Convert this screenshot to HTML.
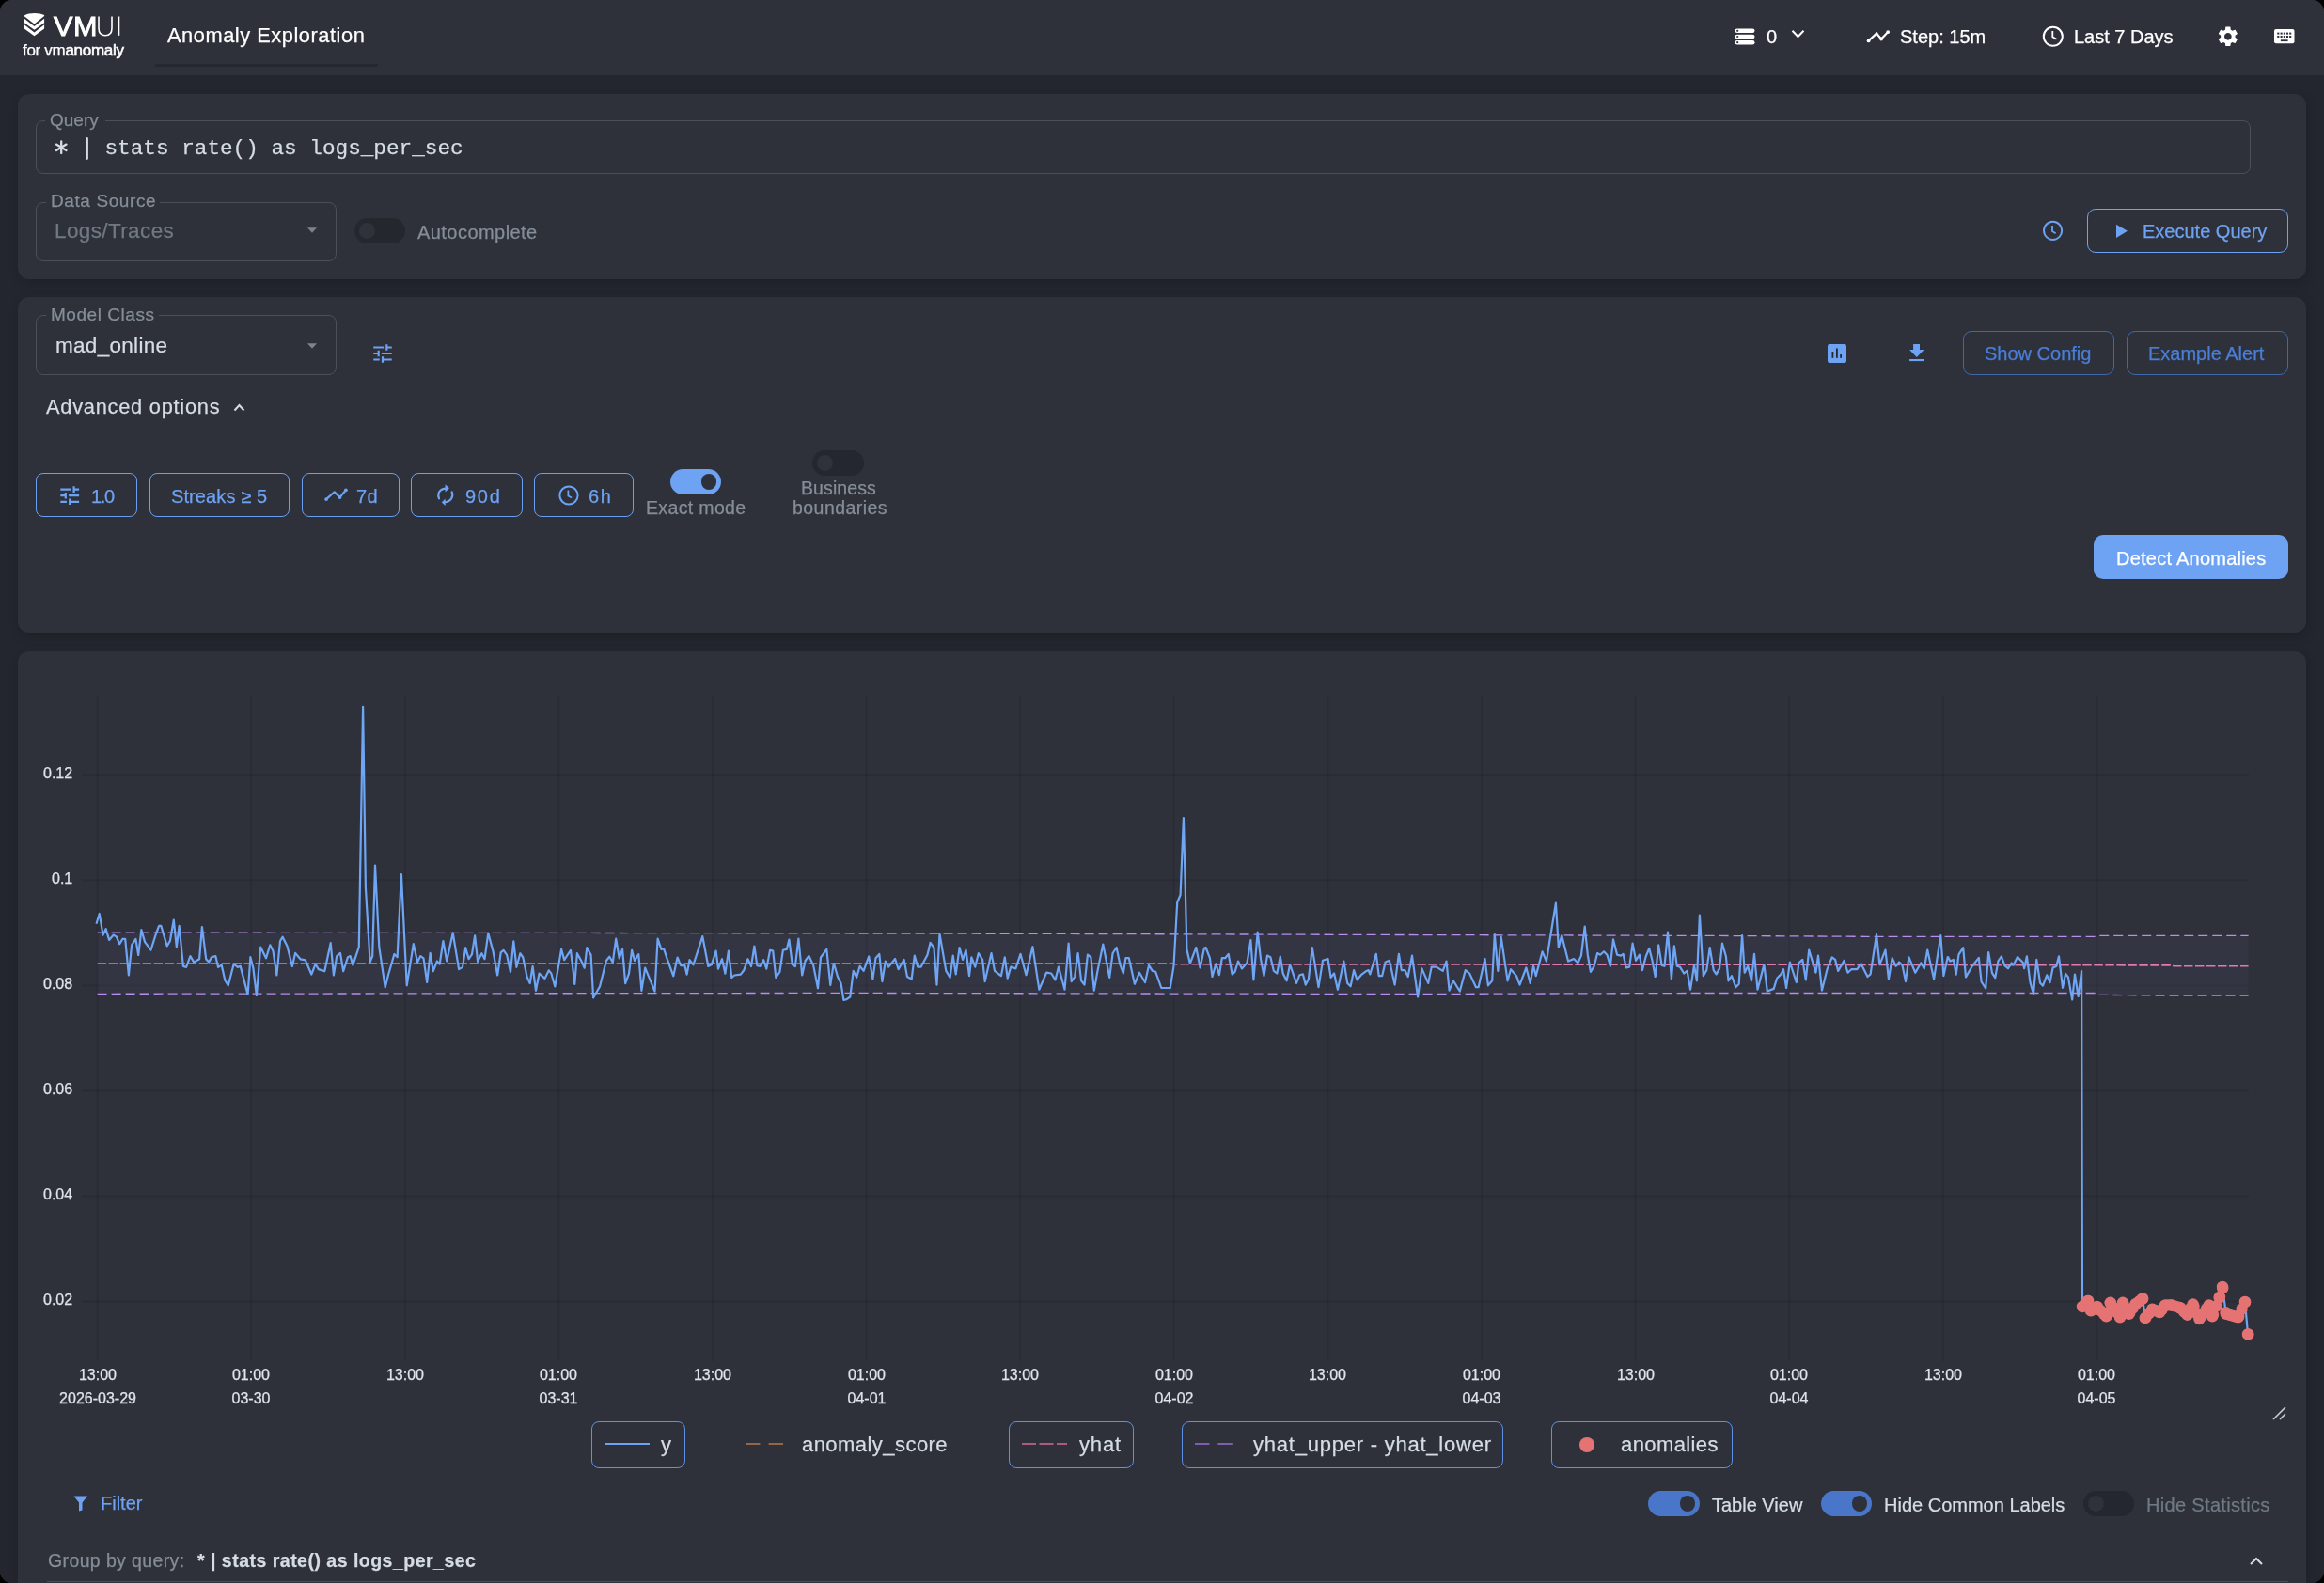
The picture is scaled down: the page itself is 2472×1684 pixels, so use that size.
<!DOCTYPE html><html><head><meta charset="utf-8"><style>
html,body{margin:0;padding:0;}
body{width:2472px;height:1684px;overflow:hidden;position:relative;background:#23262e;font-family:'Liberation Sans',sans-serif;}
.a{position:absolute;box-sizing:border-box;}
.t{position:absolute;white-space:nowrap;will-change:transform;-webkit-text-stroke:0.25px currentColor;}
</style></head><body>
<div class="a" style="left:0px;top:0px;width:2472px;height:80px;background:#2e313a;"></div>
<svg class="a" style="left:22px;top:10px;" width="30" height="32" viewBox="0 0 30 32"><path d="M3.8 6.4 C9 3.2 20 3.2 25.1 6.1 L25.1 7.1 L14.5 15.4 L3.8 7.3 Z" fill="#fff"/>
<path d="M3.8 9.8 L14.5 17.9 L25.1 9.8 L25.1 14.2 L14.5 21.8 L3.8 14.2 Z" fill="#fff"/>
<path d="M3.8 16.3 L14.5 24.5 L25.1 16.3 L25.1 20.6 L14.5 28.3 L3.8 20.6 Z" fill="#fff"/></svg>
<div class="t" style="left:56.50px;top:13.69px;font-size:28.6px;line-height:28.6px;color:#fff;font-weight:normal;font-family:'Liberation Sans', sans-serif;letter-spacing:0.6px;transform:scaleX(1.07);transform-origin:0 0;-webkit-text-stroke:0.9px #fff;">VM</div>
<svg class="a" style="left:103px;top:17px;" width="30" height="22" viewBox="0 0 30 22"><path d="M2 0.5 V13 C2 18.5 5.2 20.8 9 20.8 C12.8 20.8 16 18.5 16 13 V0.5" fill="none" stroke="#fff" stroke-width="1.6"/><path d="M23.5 0.5 V20.8" stroke="#fff" stroke-width="1.6"/></svg>
<div class="t" style="left:23.50px;top:45.15px;font-size:17px;line-height:17px;color:#fff;font-weight:normal;font-family:'Liberation Sans', sans-serif;letter-spacing:-0.3px;">for vm<span style="-webkit-text-stroke:0.55px #fff">anomaly</span></div>
<div class="t" style="left:177.50px;top:26.67px;font-size:21.8px;line-height:21.8px;color:#fff;font-weight:normal;font-family:'Liberation Sans', sans-serif;letter-spacing:0.55px;">Anomaly Exploration</div>
<div class="a" style="left:165px;top:68px;width:237px;height:3px;background:#25282f;"></div>
<svg class="a" style="left:1845px;top:30px;" width="22" height="18" viewBox="0 0 22 18"><rect x="0.5" y="0.5" width="21" height="4.6" rx="2.3" fill="#fff"/><rect x="0.5" y="6.7" width="21" height="4.6" rx="2.3" fill="#fff"/><rect x="0.5" y="12.9" width="21" height="4.6" rx="2.3" fill="#fff"/>
<circle cx="3.2" cy="2.8" r="1.1" fill="#2e313a"/><circle cx="3.2" cy="9" r="1.1" fill="#2e313a"/><circle cx="3.2" cy="15.2" r="1.1" fill="#2e313a"/></svg>
<div class="t" style="left:1879.00px;top:29.20px;font-size:20px;line-height:20px;color:#fff;font-weight:normal;font-family:'Liberation Sans', sans-serif;letter-spacing:0px;">0</div>
<svg class="a" style="left:1905px;top:31px;" width="16" height="10" viewBox="0 0 16 10"><path d="M1.5 1.8 L7.5 8 L13.5 1.8" fill="none" stroke="#fff" stroke-width="2"/></svg>
<svg class="a" style="left:1980px;top:25px;" width="34" height="26" viewBox="0 0 34 26"><path d="M7.6 18.4 L16.1 10.6 L21.1 16.5 L28.2 9.1" fill="none" stroke="#fff" stroke-width="2.2" stroke-linejoin="round"/><circle cx="7.6" cy="18.4" r="1.9" fill="#fff"/><circle cx="21.1" cy="16.5" r="1.9" fill="#fff"/><circle cx="28.2" cy="9.1" r="1.9" fill="#fff"/><circle cx="16.1" cy="10.6" r="1.3" fill="#fff"/></svg>
<div class="t" style="left:2021.00px;top:29.20px;font-size:20px;line-height:20px;color:#fff;font-weight:normal;font-family:'Liberation Sans', sans-serif;letter-spacing:0px;">Step: 15m</div>
<svg class="a" style="left:2172px;top:27px;" width="24" height="24" viewBox="0 0 24 24"><circle cx="11.8" cy="11.8" r="10" fill="none" stroke="#fff" stroke-width="2"/><path d="M11.3 6 V12.3 L15.5 14.8" fill="none" stroke="#fff" stroke-width="1.8"/></svg>
<div class="t" style="left:2206.00px;top:29.20px;font-size:20px;line-height:20px;color:#fff;font-weight:normal;font-family:'Liberation Sans', sans-serif;letter-spacing:0px;">Last 7 Days</div>
<svg class="a" style="left:2357px;top:25.8px" width="25.7" height="25.7" viewBox="0 0 24 24"><path fill="#fff" d="M19.14 12.94c.04-.3.06-.61.06-.94 0-.32-.02-.64-.07-.94l2.03-1.58c.18-.14.23-.41.12-.61l-1.92-3.32c-.12-.22-.37-.29-.59-.22l-2.39.96c-.5-.38-1.03-.7-1.62-.94l-.36-2.54c-.04-.24-.24-.41-.48-.41h-3.84c-.24 0-.43.17-.47.41l-.36 2.54c-.59.24-1.13.57-1.62.94l-2.39-.96c-.22-.08-.47 0-.59.22L2.74 8.87c-.12.21-.08.47.12.61l2.03 1.58c-.05.3-.09.63-.09.94s.02.64.07.94l-2.03 1.58c-.18.14-.23.41-.12.61l1.92 3.32c.12.22.37.29.59.22l2.39-.96c.5.38 1.03.7 1.62.94l.36 2.54c.05.24.24.41.48.41h3.84c.24 0 .44-.17.47-.41l.36-2.54c.59-.24 1.13-.56 1.62-.94l2.39.96c.22.08.47 0 .59-.22l1.92-3.32c.12-.22.07-.47-.12-.61l-2.01-1.58zM12 15.6c-1.98 0-3.6-1.62-3.6-3.6s1.62-3.6 3.6-3.6 3.6 1.62 3.6 3.6-1.62 3.6-3.6 3.6z"/></svg>
<svg class="a" style="left:2419px;top:30.9px;" width="22" height="16" viewBox="0 0 22 16"><rect x="0" y="0" width="21.5" height="15.3" rx="2" fill="#fff"/><rect x="3.25" y="3.6" width="2.1" height="2" fill="#2e313a"/><rect x="6.55" y="3.6" width="2.1" height="2" fill="#2e313a"/><rect x="9.85" y="3.6" width="2.1" height="2" fill="#2e313a"/><rect x="12.95" y="3.6" width="2.1" height="2" fill="#2e313a"/><rect x="16.15" y="3.6" width="2.1" height="2" fill="#2e313a"/><rect x="3.25" y="7.0" width="2.1" height="2" fill="#2e313a"/><rect x="6.55" y="7.0" width="2.1" height="2" fill="#2e313a"/><rect x="9.85" y="7.0" width="2.1" height="2" fill="#2e313a"/><rect x="12.95" y="7.0" width="2.1" height="2" fill="#2e313a"/><rect x="16.15" y="7.0" width="2.1" height="2" fill="#2e313a"/><rect x="6.9" y="11.3" width="7.7" height="1.8" fill="#2e313a"/></svg>
<div class="a" style="left:19px;top:100px;width:2434px;height:197px;background:#2e313a;border-radius:12px;box-shadow: rgba(0,0,0,0.16) 2px 4px 12px;"></div>
<div class="a" style="left:19px;top:316px;width:2434px;height:357px;background:#2e313a;border-radius:12px;box-shadow: rgba(0,0,0,0.16) 2px 4px 12px;"></div>
<div class="a" style="left:19px;top:693px;width:2434px;height:1067px;background:#2e313a;border-radius:12px;box-shadow: rgba(0,0,0,0.16) 2px 4px 12px;"></div>
<div class="a" style="left:38px;top:128px;width:2356px;height:57px;border:1px solid #4a4f58;border-radius:8px;"></div>
<div class="a" style="left:48px;top:126px;width:64px;height:5px;background:#2e313a;"></div>
<div class="t" style="left:53.00px;top:117.85px;font-size:19px;line-height:19px;color:#858d98;font-weight:normal;font-family:'Liberation Sans', sans-serif;letter-spacing:0px;">Query</div>
<div class="t" style="left:57.00px;top:146.55px;font-size:22.7px;line-height:22.7px;color:#d5dce4;font-weight:normal;font-family:'Liberation Mono', monospace;letter-spacing:0px;">&nbsp;&nbsp;&nbsp;&nbsp;stats rate() as logs_per_sec</div>
<svg class="a" style="left:55px;top:144px;" width="45" height="30" viewBox="0 0 45 30"><g stroke="#d5dce4" stroke-width="2.3" stroke-linecap="round"><path d="M10.2 6.5 V19.1"/><path d="M4.9 9.6 L15.5 16"/><path d="M4.9 16 L15.5 9.6"/><path d="M37.6 3.4 V24.6" stroke-width="2.6"/></g></svg>
<div class="a" style="left:38px;top:215px;width:320px;height:63px;border:1px solid #4a4f58;border-radius:8px;"></div>
<div class="a" style="left:49px;top:213px;width:121px;height:5px;background:#2e313a;"></div>
<div class="t" style="left:54.00px;top:203.85px;font-size:19px;line-height:19px;color:#858d98;font-weight:normal;font-family:'Liberation Sans', sans-serif;letter-spacing:0.6px;">Data Source</div>
<div class="t" style="left:58.00px;top:234.88px;font-size:22.5px;line-height:22.5px;color:#6f7883;font-weight:normal;font-family:'Liberation Sans', sans-serif;letter-spacing:0.38px;">Logs/Traces</div>
<svg class="a" style="left:326px;top:241px;" width="12" height="8" viewBox="0 0 12 8"><path d="M1 1.2 L11 1.2 L6 6.8 Z" fill="#7c848e"/></svg>
<div class="a" style="left:377px;top:232px;width:54px;height:27px;background:#24272d;border-radius:13.5px;"></div>
<div class="a" style="left:382.3px;top:236.9px;width:17.2px;height:17.2px;border-radius:50%;background:#2f3239;"></div>
<div class="t" style="left:443.50px;top:236.50px;font-size:20px;line-height:20px;color:#858d98;font-weight:normal;font-family:'Liberation Sans', sans-serif;letter-spacing:0.45px;">Autocomplete</div>
<svg class="a" style="left:2172px;top:234px;" width="24" height="24" viewBox="0 0 24 24"><circle cx="11.6" cy="11.3" r="9.6" fill="none" stroke="#6ea2f3" stroke-width="2"/><path d="M11 6 V12 L14.6 14.2" fill="none" stroke="#6ea2f3" stroke-width="1.8"/></svg>
<div class="a" style="left:2220px;top:222px;width:214px;height:47px;border:1px solid #6ea2f3;border-radius:9px;"></div>
<svg class="a" style="left:2250px;top:238px;" width="14" height="16" viewBox="0 0 14 16"><path d="M1 0.7 L13 7.8 L1 15 Z" fill="#6ea2f3"/></svg>
<div class="t" style="left:2279.00px;top:236.00px;font-size:20px;line-height:20px;color:#6ea2f3;font-weight:normal;font-family:'Liberation Sans', sans-serif;letter-spacing:0px;">Execute Query</div>
<div class="a" style="left:38px;top:335px;width:320px;height:64px;border:1px solid #4a4f58;border-radius:8px;"></div>
<div class="a" style="left:49px;top:333px;width:120px;height:5px;background:#2e313a;"></div>
<div class="t" style="left:54.00px;top:324.85px;font-size:19px;line-height:19px;color:#858d98;font-weight:normal;font-family:'Liberation Sans', sans-serif;letter-spacing:0.54px;">Model Class</div>
<div class="t" style="left:58.50px;top:357.07px;font-size:22.5px;line-height:22.5px;color:#d5dce4;font-weight:normal;font-family:'Liberation Sans', sans-serif;letter-spacing:0.3px;">mad_online</div>
<svg class="a" style="left:326px;top:364px;" width="12" height="8" viewBox="0 0 12 8"><path d="M1 1.2 L11 1.2 L6 6.8 Z" fill="#7c848e"/></svg>
<svg class="a" style="left:393.85px;top:362.8px" width="26.0" height="26.0" viewBox="0 0 24 24"><path fill="#6ea2f3" d="M3 17v2h6v-2H3zM3 5v2h10V5H3zm10 16v-2h8v-2h-8v-2h-2v6h2zM7 9v2H3v2h4v2h2V9H7zm14 4v-2H11v2h10zm-6-4h2V7h4V5h-4V3h-2v6z"/></svg>
<div class="t" style="left:48.50px;top:421.97px;font-size:21.8px;line-height:21.8px;color:#d5dce4;font-weight:normal;font-family:'Liberation Sans', sans-serif;letter-spacing:0.75px;">Advanced options</div>
<svg class="a" style="left:247px;top:427px;" width="15" height="12" viewBox="0 0 15 12"><path d="M2.5 9.5 L7.5 4 L12.5 9.5" fill="none" stroke="#d5dce4" stroke-width="2"/></svg>
<div class="a" style="left:38px;top:503px;width:108px;height:47px;border:1px solid #6a9ef2;border-radius:8px;"></div>
<div class="a" style="left:159px;top:503px;width:149px;height:47px;border:1px solid #6a9ef2;border-radius:8px;"></div>
<div class="a" style="left:321px;top:503px;width:104px;height:47px;border:1px solid #6a9ef2;border-radius:8px;"></div>
<div class="a" style="left:437px;top:503px;width:119px;height:47px;border:1px solid #6a9ef2;border-radius:8px;"></div>
<div class="a" style="left:568px;top:503px;width:106px;height:47px;border:1px solid #6a9ef2;border-radius:8px;"></div>
<svg class="a" style="left:61.4px;top:514.1px" width="26.4" height="26.4" viewBox="0 0 24 24"><path fill="#6ea2f3" d="M3 17v2h6v-2H3zM3 5v2h10V5H3zm10 16v-2h8v-2h-8v-2h-2v6h2zM7 9v2H3v2h4v2h2V9H7zm14 4v-2H11v2h10zm-6-4h2V7h4V5h-4V3h-2v6z"/></svg>
<div class="t" style="left:96.80px;top:517.80px;font-size:20px;line-height:20px;color:#6ea2f3;font-weight:normal;font-family:'Liberation Sans', sans-serif;letter-spacing:-1.3px;">1.0</div>
<div class="t" style="left:182.00px;top:517.80px;font-size:20px;line-height:20px;color:#6ea2f3;font-weight:normal;font-family:'Liberation Sans', sans-serif;letter-spacing:0.1px;">Streaks ≥ 5</div>
<svg class="a" style="left:340px;top:515px;" width="34" height="22" viewBox="0 0 34 22"><path d="M7.1 16.1 L15.7 8.3 L21.5 14.1 L27.9 6.3" fill="none" stroke="#6ea2f3" stroke-width="2.2" stroke-linejoin="round"/><circle cx="7.1" cy="16.1" r="1.9" fill="#6ea2f3"/><circle cx="21.5" cy="14.1" r="1.9" fill="#6ea2f3"/><circle cx="27.9" cy="6.3" r="1.9" fill="#6ea2f3"/></svg>
<div class="t" style="left:379.00px;top:517.80px;font-size:20px;line-height:20px;color:#6ea2f3;font-weight:normal;font-family:'Liberation Sans', sans-serif;letter-spacing:0.5px;">7d</div>
<svg class="a" style="left:458px;top:510px;" width="32" height="32" viewBox="0 0 32 32"><path d="M16 9.6 C12.5 9.9 9.6 11.6 8.6 14.6 C8 16.5 8.2 18.6 9 20.4" fill="none" stroke="#6ea2f3" stroke-width="2.2" stroke-linecap="round"/><path d="M19.9 9.3 L15.6 5.2 L15.5 13.5 Z" fill="#6ea2f3"/><path d="M22.7 13.3 C23.6 15.6 23.5 18.4 22 20.7 C20.4 23 17.6 24.2 14.5 24.3" fill="none" stroke="#6ea2f3" stroke-width="2.2" stroke-linecap="round"/><path d="M11.8 24.4 L15.6 20.6 L15.7 28 Z" fill="#6ea2f3"/></svg>
<div class="t" style="left:495.20px;top:517.80px;font-size:20px;line-height:20px;color:#6ea2f3;font-weight:normal;font-family:'Liberation Sans', sans-serif;letter-spacing:1.7px;">90d</div>
<svg class="a" style="left:593px;top:515px;" width="24" height="24" viewBox="0 0 24 24"><circle cx="12" cy="12" r="9.6" fill="none" stroke="#6ea2f3" stroke-width="2"/><path d="M11.4 6.5 V12.4 L15 14.6" fill="none" stroke="#6ea2f3" stroke-width="1.8"/></svg>
<div class="t" style="left:626.30px;top:517.80px;font-size:20px;line-height:20px;color:#6ea2f3;font-weight:normal;font-family:'Liberation Sans', sans-serif;letter-spacing:1.6px;">6h</div>
<div class="a" style="left:713px;top:499px;width:54px;height:27px;background:#6ea2f3;border-radius:13.5px;"></div>
<div class="a" style="left:745.6px;top:504.1px;width:16.8px;height:16.8px;border-radius:50%;background:#2e313a;"></div>
<div class="t" style="left:686.50px;top:530.62px;font-size:19.5px;line-height:19.5px;color:#858d98;font-weight:normal;font-family:'Liberation Sans', sans-serif;letter-spacing:0.35px;">Exact mode</div>
<div class="a" style="left:864px;top:479px;width:55px;height:27px;background:#24272d;border-radius:13.5px;"></div>
<div class="a" style="left:869.3px;top:483.9px;width:17.2px;height:17.2px;border-radius:50%;background:#2f3239;"></div>
<div class="t" style="left:852.00px;top:509.63px;font-size:19.5px;line-height:19.5px;color:#858d98;font-weight:normal;font-family:'Liberation Sans', sans-serif;letter-spacing:0.1px;">Business</div>
<div class="t" style="left:842.50px;top:530.62px;font-size:19.5px;line-height:19.5px;color:#858d98;font-weight:normal;font-family:'Liberation Sans', sans-serif;letter-spacing:0.45px;">boundaries</div>
<svg class="a" style="left:1944px;top:366px;" width="20" height="20" viewBox="0 0 20 20"><rect x="0" y="0" width="20" height="20" rx="2.2" fill="#6ea2f3"/><rect x="4.5" y="8" width="1.8" height="6.8" fill="#25282e"/><rect x="9" y="4.5" width="1.8" height="10.3" fill="#25282e"/><rect x="13.2" y="11" width="1.8" height="3.8" fill="#25282e"/></svg>
<svg class="a" style="left:2030px;top:365px;" width="18" height="21" viewBox="0 0 18 21"><path d="M5.1 0.9 H12 V7.1 H16.6 L8.8 14.9 L1.1 7.1 H5.1 Z" fill="#6ea2f3"/><rect x="1.1" y="17" width="14.9" height="2.1" fill="#6ea2f3"/></svg>
<div class="a" style="left:2088px;top:352px;width:161px;height:47px;border:1px solid #3f68a8;border-radius:9px;"></div>
<div class="t" style="left:2111.00px;top:365.90px;font-size:20px;line-height:20px;color:#4a7ed8;font-weight:normal;font-family:'Liberation Sans', sans-serif;letter-spacing:0px;">Show Config</div>
<div class="a" style="left:2262px;top:352px;width:172px;height:47px;border:1px solid #3f68a8;border-radius:9px;"></div>
<div class="t" style="left:2285.00px;top:365.90px;font-size:20px;line-height:20px;color:#4a7ed8;font-weight:normal;font-family:'Liberation Sans', sans-serif;letter-spacing:0px;">Example Alert</div>
<div class="a" style="left:2227px;top:569px;width:207px;height:47px;background:#6ea2f3;border-radius:10px;"></div>
<div class="t" style="left:2250.50px;top:583.50px;font-size:20px;line-height:20px;color:#fff;font-weight:normal;font-family:'Liberation Sans', sans-serif;letter-spacing:0.24px;">Detect Anomalies</div>
<svg class="a" style="left:0;top:0" width="2472" height="1684">
<line x1="87" y1="824.2" x2="2392" y2="824.2" stroke="rgba(0,0,0,0.1)" stroke-width="2"/>
<line x1="87" y1="936.3" x2="2392" y2="936.3" stroke="rgba(0,0,0,0.1)" stroke-width="2"/>
<line x1="87" y1="1048.4" x2="2392" y2="1048.4" stroke="rgba(0,0,0,0.1)" stroke-width="2"/>
<line x1="87" y1="1160.4" x2="2392" y2="1160.4" stroke="rgba(0,0,0,0.1)" stroke-width="2"/>
<line x1="87" y1="1272.5" x2="2392" y2="1272.5" stroke="rgba(0,0,0,0.1)" stroke-width="2"/>
<line x1="87" y1="1384.5" x2="2392" y2="1384.5" stroke="rgba(0,0,0,0.1)" stroke-width="2"/>
<line x1="103.6" y1="740" x2="103.6" y2="1448" stroke="rgba(0,0,0,0.1)" stroke-width="2"/>
<line x1="267.2" y1="740" x2="267.2" y2="1448" stroke="rgba(0,0,0,0.1)" stroke-width="2"/>
<line x1="430.8" y1="740" x2="430.8" y2="1448" stroke="rgba(0,0,0,0.1)" stroke-width="2"/>
<line x1="594.4" y1="740" x2="594.4" y2="1448" stroke="rgba(0,0,0,0.1)" stroke-width="2"/>
<line x1="758.0" y1="740" x2="758.0" y2="1448" stroke="rgba(0,0,0,0.1)" stroke-width="2"/>
<line x1="921.6" y1="740" x2="921.6" y2="1448" stroke="rgba(0,0,0,0.1)" stroke-width="2"/>
<line x1="1085.2" y1="740" x2="1085.2" y2="1448" stroke="rgba(0,0,0,0.1)" stroke-width="2"/>
<line x1="1248.8" y1="740" x2="1248.8" y2="1448" stroke="rgba(0,0,0,0.1)" stroke-width="2"/>
<line x1="1412.4" y1="740" x2="1412.4" y2="1448" stroke="rgba(0,0,0,0.1)" stroke-width="2"/>
<line x1="1576.0" y1="740" x2="1576.0" y2="1448" stroke="rgba(0,0,0,0.1)" stroke-width="2"/>
<line x1="1739.6" y1="740" x2="1739.6" y2="1448" stroke="rgba(0,0,0,0.1)" stroke-width="2"/>
<line x1="1903.2" y1="740" x2="1903.2" y2="1448" stroke="rgba(0,0,0,0.1)" stroke-width="2"/>
<line x1="2066.8" y1="740" x2="2066.8" y2="1448" stroke="rgba(0,0,0,0.1)" stroke-width="2"/>
<line x1="2230.4" y1="740" x2="2230.4" y2="1448" stroke="rgba(0,0,0,0.1)" stroke-width="2"/>
<polygon points="103.6,992.2 592,992.4 1083,993.3 1492,994.5 1820,995.4 1985,996.3 2230,996.3 2231,995.4 2391.6,995.4 2391.6,1059.2 2311,1059.2 2231,1058.3 2230,1056.5 1800,1056.5 1492,1057.5 900,1056.4 103.6,1057.3" fill="rgba(160,130,230,0.055)"/>
<polyline points="103.6,992.2 592,992.4 1083,993.3 1492,994.5 1820,995.4 1985,996.3 2230,996.3 2231,995.4 2391.6,995.4" fill="none" stroke="#b98cf0" stroke-width="1.3" stroke-dasharray="10 5"/>
<polyline points="103.6,1057.3 900,1056.4 1492,1057.5 1800,1056.5 2230,1056.5 2231,1058.3 2311,1059.2 2391.6,1059.2" fill="none" stroke="#b98cf0" stroke-width="1.3" stroke-dasharray="10 5"/>
<polyline points="103.6,1025 1248,1025 1249,1025.8 1900,1026.3 2311,1026.9 2312,1027.8 2391.6,1027.8" fill="none" stroke="#e479b0" stroke-width="1.6" stroke-dasharray="9.5 2.5"/>
<polyline points="102.5,982.7 105.7,972.0 109.6,994.6 112.6,988.1 116.1,999.9 120.8,994.6 124.0,996.7 127.2,1004.2 130.4,998.9 133.2,998.9 136.9,1037.5 140.1,1005.3 144.4,998.9 147.2,1016.0 150.4,989.2 154.1,1002.1 160.5,1010.7 165.9,993.5 169.1,984.9 171.3,984.9 177.7,1006.4 180.9,1001.0 184.8,978.5 187.8,1007.5 190.6,984.9 194.9,1027.9 198.1,1028.9 202.4,1017.1 206.3,1023.6 212.1,1020.3 214.9,986.0 219.2,1020.3 222.2,1023.6 225.0,1018.2 229.3,1017.1 232.1,1028.9 235.7,1026.8 239.4,1042.9 242.8,1048.3 248.6,1025.7 252.9,1028.9 255.7,1027.9 263.6,1057.9 266.4,1018.2 269.4,1030.0 272.9,1059.0 277.2,1007.5 283.0,1019.3 287.3,1005.3 290.5,1011.8 294.4,1037.5 298.0,1001.0 300.6,996.7 305.5,1006.4 310.9,1027.9 314.1,1013.9 319.5,1020.3 324.9,1021.4 331.3,1036.5 335.6,1025.7 338.8,1031.1 345.3,1033.2 351.7,1003.2 354.9,1037.5 358.2,1017.1 362.0,1013.9 365.2,1033.2 370.0,1018.2 372.6,1017.1 375.3,1026.8 381.8,1007.5 386.1,751.8 388.9,944.1 393.6,1023.6 396.2,1017.1 399.0,920.5 403.3,1007.5 409.7,1050.4 412.9,1037.5 419.4,1015.0 422.6,1018.2 426.9,930.1 432.7,1048.3 439.8,1004.2 444.1,1023.6 447.3,1017.1 450.5,1019.3 454.2,1045.0 457.6,1013.9 460.8,1033.2 464.9,1022.5 467.7,1025.7 471.4,1001.0 475.2,1022.5 481.7,992.4 488.1,1031.1 492.0,1028.9 495.2,1008.2 498.6,1020.2 502.0,1015.1 505.1,995.3 508.1,1022.8 512.4,1014.2 515.5,1020.2 519.3,992.7 524.4,1011.6 529.2,1037.5 532.7,1013.4 535.6,1010.8 539.1,1015.9 543.0,1034.0 546.3,1001.3 549.4,1028.8 553.3,1014.2 556.3,1018.5 560.6,1039.2 563.7,1046.1 566.6,1028.0 570.0,1053.8 573.5,1035.7 579.5,1040.9 583.8,1032.3 586.4,1035.7 590.3,1049.5 597.1,1009.9 600.2,1021.1 607.0,1010.8 611.3,1046.9 613.9,1014.2 618.2,1022.0 621.7,1029.7 624.3,1008.2 628.6,1015.9 631.1,1061.5 638.0,1049.5 644.9,1022.0 648.3,1017.7 651.8,1023.7 655.2,998.7 658.7,1019.4 662.1,1009.9 665.2,1046.1 669.0,1035.7 672.1,1010.8 675.0,1022.0 679.3,1015.1 682.4,1053.8 686.2,1029.7 696.5,1054.7 699.6,998.7 703.4,1009.9 706.0,1009.1 710.3,1022.0 716.3,1038.3 720.6,1018.5 724.1,1027.1 728.4,1027.1 730.6,1036.6 733.5,1021.1 737.5,1026.3 747.3,996.1 753.3,1028.0 756.8,1026.3 761.6,1011.6 764.0,1030.6 768.0,1020.2 771.4,1035.7 774.9,1011.6 778.3,1040.0 781.2,1037.5 787.8,1036.6 791.2,1032.3 795.5,1020.2 799.0,1028.0 802.4,1006.5 805.3,1027.1 808.4,1028.0 812.2,1021.1 815.3,1030.6 819.1,1010.8 822.2,1011.6 825.3,1040.0 829.4,1034.0 832.9,1010.8 836.8,1009.9 839.4,999.6 842.8,1026.3 845.9,1028.0 849.4,998.7 853.2,1037.5 856.6,1022.0 860.4,1016.8 865.2,1027.1 870.0,1051.2 873.0,1018.5 879.3,1009.9 883.3,1047.8 886.7,1025.4 887.1,1025.2 891.0,1039.0 894.5,1045.9 897.4,1063.9 900.5,1063.1 904.3,1060.5 907.7,1032.9 911.2,1039.8 914.6,1027.8 918.6,1032.9 924.2,1017.5 928.4,1041.5 931.5,1019.2 935.3,1014.9 938.4,1044.1 941.8,1022.6 945.2,1028.6 952.1,1020.0 955.6,1031.2 961.6,1020.9 965.0,1039.0 969.7,1041.5 972.8,1016.6 976.2,1028.6 979.7,1028.6 986.5,1015.7 989.6,1002.8 993.4,1008.0 996.5,1047.6 999.5,993.4 1006.3,1032.9 1010.6,1039.8 1013.7,1016.6 1016.7,1036.4 1020.6,1008.0 1024.1,1020.9 1027.5,1010.6 1031.0,1038.1 1033.4,1018.3 1037.3,1028.6 1040.8,1014.0 1045.1,1020.9 1047.7,1044.1 1054.5,1014.0 1058.0,1032.9 1064.9,1038.1 1068.8,1018.3 1071.7,1040.7 1075.2,1028.6 1080.4,1030.4 1085.5,1014.9 1091.5,1037.2 1098.4,1007.1 1105.3,1052.7 1113.1,1034.7 1118.2,1035.5 1122.5,1042.4 1126.0,1028.6 1132.5,1052.7 1136.6,1003.7 1139.7,1044.1 1143.2,1039.0 1146.6,1014.0 1150.1,1043.3 1153.5,1047.6 1156.9,1015.7 1160.4,1018.3 1163.8,1053.6 1167.3,1033.8 1173.3,1004.5 1180.2,1039.8 1183.6,1014.0 1187.6,1008.0 1191.4,1026.1 1194.8,1035.5 1197.4,1019.2 1200.8,1019.2 1206.9,1046.7 1212.0,1034.7 1218.0,1045.0 1222.0,1026.9 1225.8,1032.9 1229.2,1033.8 1235.3,1051.0 1244.7,1051.0 1248.5,1027.8 1252.2,960.0 1255.6,952.0 1258.9,870.0 1262.4,1010.0 1265.8,1025.0 1272.3,1008.0 1276.6,1029.5 1280.9,1008.8 1282.6,1008.0 1286.9,1019.2 1289.5,1039.0 1293.4,1025.2 1296.9,1037.2 1299.8,1019.2 1303.2,1019.2 1306.7,1014.9 1310.6,1036.4 1313.6,1033.8 1317.0,1022.6 1321.0,1030.4 1326.5,1024.3 1330.4,1000.2 1333.4,1042.4 1337.7,991.6 1341.1,1020.9 1344.5,1038.1 1348.0,1016.6 1351.4,1018.3 1354.9,1032.9 1358.3,1035.5 1361.8,1017.5 1364.7,1035.5 1368.6,1043.3 1372.1,1026.1 1379.0,1045.9 1382.4,1037.2 1385.9,1036.4 1388.8,1047.6 1391.9,1041.5 1395.8,1008.0 1402.5,1050.2 1407.0,1021.8 1412.5,1020.0 1415.6,1039.8 1419.1,1035.5 1422.9,1052.7 1429.4,1022.6 1433.2,1045.9 1436.6,1049.3 1440.1,1032.1 1443.5,1042.4 1447.8,1037.2 1452.1,1033.8 1455.6,1032.1 1457.3,1036.4 1463.8,1014.9 1466.7,1038.1 1470.2,1038.1 1473.6,1023.5 1477.9,1021.8 1483.6,1047.6 1487.9,1014.9 1490.8,1032.1 1494.3,1032.1 1497.7,1039.0 1502.0,1016.6 1508.1,1060.5 1512.4,1030.4 1519.2,1045.9 1522.7,1028.6 1527.8,1028.6 1534.7,1032.9 1538.5,1022.6 1541.6,1053.6 1545.9,1043.3 1552.8,1054.5 1558.8,1032.1 1563.1,1035.5 1570.0,1050.2 1572.6,1050.2 1579.5,1020.0 1582.9,1048.4 1587.2,1043.3 1589.8,994.2 1593.3,1032.9 1596.7,996.8 1603.6,1043.3 1607.0,1031.2 1613.0,1038.1 1616.5,1047.6 1623.4,1029.5 1627.7,1045.9 1631.1,1027.8 1633.7,1038.1 1640.6,1012.3 1644.9,1022.6 1654.9,960.7 1657.8,1008.0 1661.2,995.1 1668.1,1022.6 1674.1,1020.0 1678.4,1024.3 1681.9,1016.6 1685.7,985.6 1688.8,1015.7 1691.9,1033.8 1695.7,1027.8 1699.1,1014.0 1702.2,1015.7 1706.0,1012.3 1709.4,1015.7 1712.9,1027.8 1716.0,999.4 1720.1,1015.7 1724.1,1016.6 1726.6,1014.9 1729.7,1029.5 1733.2,1028.6 1736.6,1003.7 1740.1,1021.8 1743.8,1015.7 1746.9,1032.1 1750.7,1017.5 1754.2,1008.8 1757.3,1020.9 1760.7,1039.0 1764.2,1005.4 1767.6,1026.9 1770.5,1027.8 1774.0,991.6 1777.9,1041.5 1780.9,1006.3 1783.8,1027.8 1786.9,1028.6 1791.2,1035.5 1794.6,1032.9 1798.1,1052.7 1802.0,1026.9 1804.9,1043.3 1807.9,973.6 1811.8,1038.1 1815.3,1032.1 1818.7,1008.0 1822.7,1032.1 1825.6,1036.4 1829.0,1030.4 1832.0,1003.7 1835.9,1017.5 1838.5,1043.3 1842.0,1038.1 1846.3,1050.2 1849.7,1046.7 1853.1,995.1 1855.7,1034.7 1859.2,1027.8 1863.0,1043.3 1866.0,1014.9 1869.5,1052.7 1876.4,1026.1 1879.8,1054.5 1886.7,1051.9 1890.1,1040.7 1894.4,1036.4 1897.0,1031.2 1900.1,1051.0 1903.9,1023.5 1910.8,1045.0 1913.4,1024.3 1917.3,1020.9 1920.8,1042.4 1924.2,1010.6 1931.5,1034.7 1934.0,1016.6 1938.0,1053.6 1943.5,1031.2 1948.7,1018.3 1952.1,1020.9 1955.2,1032.9 1961.6,1021.8 1965.5,1034.7 1969.3,1031.2 1975.3,1031.2 1979.6,1025.2 1986.5,1039.0 1989.6,1036.4 1996.0,994.2 1999.4,1026.1 2005.5,1010.6 2008.9,1041.5 2012.7,1019.2 2016.7,1027.8 2020.1,1023.5 2023.5,1026.9 2027.0,1044.1 2030.4,1018.3 2037.3,1034.7 2043.3,1024.3 2046.8,1030.4 2050.2,1010.6 2057.1,1041.5 2064.3,995.1 2067.4,1038.1 2071.7,1018.3 2072.1,1018.1 2074.3,1022.4 2077.8,1020.9 2080.7,1036.6 2083.5,1015.3 2088.2,1008.2 2091.0,1039.4 2097.7,1028.0 2104.8,1018.8 2107.6,1044.4 2112.2,1051.5 2115.2,1013.1 2119.0,1035.1 2122.3,1040.1 2125.4,1022.4 2128.9,1017.4 2132.5,1027.3 2136.0,1030.2 2139.6,1024.5 2141.7,1026.6 2146.0,1018.1 2151.7,1023.8 2153.1,1030.2 2155.9,1017.4 2159.5,1045.1 2163.0,1057.2 2166.3,1020.9 2170.1,1045.8 2173.0,1048.6 2177.2,1037.3 2180.5,1045.1 2183.6,1029.5 2187.2,1028.0 2190.0,1017.4 2194.0,1050.8 2197.1,1035.9 2199.9,1039.4 2204.2,1063.5 2207.0,1036.6 2210.6,1060.0 2214.1,1033.0 2215.0,1390.0 2217.6,1387.4 2221.0,1384.0 2221.0,1384.0 2224.0,1394.4 2224.4,1394.1 2227.8,1391.8 2230.5,1390.0 2231.2,1390.8 2234.6,1394.4 2238.0,1397.9 2240.4,1400.4 2241.5,1396.8 2244.7,1385.8 2244.9,1386.1 2248.3,1391.2 2251.7,1396.3 2255.0,1401.3 2255.1,1400.8 2258.0,1385.8 2258.5,1386.7 2261.9,1393.1 2264.5,1397.9 2265.3,1396.7 2268.7,1391.5 2271.4,1387.5 2272.1,1386.9 2275.5,1384.3 2278.9,1381.7 2279.2,1381.5 2281.8,1402.2 2282.4,1401.5 2285.8,1397.3 2289.2,1393.1 2289.5,1392.7 2292.6,1394.0 2296.0,1395.5 2297.2,1396.0 2299.4,1393.3 2302.8,1389.0 2303.3,1388.4 2306.2,1388.4 2309.3,1388.4 2309.6,1388.5 2313.0,1389.4 2316.4,1390.4 2318.8,1391.0 2319.8,1392.0 2323.3,1395.5 2326.5,1398.7 2326.7,1398.4 2330.1,1392.0 2332.5,1387.5 2333.5,1389.7 2336.9,1397.4 2339.4,1403.0 2340.3,1401.7 2343.7,1396.9 2347.1,1392.1 2349.7,1388.4 2350.5,1391.2 2353.2,1400.4 2353.9,1398.5 2357.3,1389.5 2360.7,1380.5 2361.0,1379.8 2364.0,1369.0 2364.2,1370.2 2367.6,1396.1 2367.8,1397.9 2371.0,1398.7 2374.4,1399.6 2377.8,1400.5 2380.7,1401.3 2381.2,1400.2 2384.6,1392.6 2388.0,1385.0 2388.0,1385.2 2391.0,1419.4 2391.4,1419.4" fill="none" stroke="#6ea6f5" stroke-width="2.2" stroke-linejoin="round"/>
<circle cx="2215.0" cy="1390.0" r="6.2" fill="#e57373"/>
<circle cx="2217.6" cy="1387.4" r="6.2" fill="#e57373"/>
<circle cx="2221.0" cy="1384.0" r="6.2" fill="#e57373"/>
<circle cx="2221.0" cy="1384.0" r="6.2" fill="#e57373"/>
<circle cx="2224.0" cy="1394.4" r="6.2" fill="#e57373"/>
<circle cx="2224.4" cy="1394.1" r="6.2" fill="#e57373"/>
<circle cx="2227.8" cy="1391.8" r="6.2" fill="#e57373"/>
<circle cx="2230.5" cy="1390.0" r="6.2" fill="#e57373"/>
<circle cx="2231.2" cy="1390.8" r="6.2" fill="#e57373"/>
<circle cx="2234.6" cy="1394.4" r="6.2" fill="#e57373"/>
<circle cx="2238.0" cy="1397.9" r="6.2" fill="#e57373"/>
<circle cx="2240.4" cy="1400.4" r="6.2" fill="#e57373"/>
<circle cx="2241.5" cy="1396.8" r="6.2" fill="#e57373"/>
<circle cx="2244.7" cy="1385.8" r="6.2" fill="#e57373"/>
<circle cx="2244.9" cy="1386.1" r="6.2" fill="#e57373"/>
<circle cx="2248.3" cy="1391.2" r="6.2" fill="#e57373"/>
<circle cx="2251.7" cy="1396.3" r="6.2" fill="#e57373"/>
<circle cx="2255.0" cy="1401.3" r="6.2" fill="#e57373"/>
<circle cx="2255.1" cy="1400.8" r="6.2" fill="#e57373"/>
<circle cx="2258.0" cy="1385.8" r="6.2" fill="#e57373"/>
<circle cx="2258.5" cy="1386.7" r="6.2" fill="#e57373"/>
<circle cx="2261.9" cy="1393.1" r="6.2" fill="#e57373"/>
<circle cx="2264.5" cy="1397.9" r="6.2" fill="#e57373"/>
<circle cx="2265.3" cy="1396.7" r="6.2" fill="#e57373"/>
<circle cx="2268.7" cy="1391.5" r="6.2" fill="#e57373"/>
<circle cx="2271.4" cy="1387.5" r="6.2" fill="#e57373"/>
<circle cx="2272.1" cy="1386.9" r="6.2" fill="#e57373"/>
<circle cx="2275.5" cy="1384.3" r="6.2" fill="#e57373"/>
<circle cx="2278.9" cy="1381.7" r="6.2" fill="#e57373"/>
<circle cx="2279.2" cy="1381.5" r="6.2" fill="#e57373"/>
<circle cx="2281.8" cy="1402.2" r="6.2" fill="#e57373"/>
<circle cx="2282.4" cy="1401.5" r="6.2" fill="#e57373"/>
<circle cx="2285.8" cy="1397.3" r="6.2" fill="#e57373"/>
<circle cx="2289.2" cy="1393.1" r="6.2" fill="#e57373"/>
<circle cx="2289.5" cy="1392.7" r="6.2" fill="#e57373"/>
<circle cx="2292.6" cy="1394.0" r="6.2" fill="#e57373"/>
<circle cx="2296.0" cy="1395.5" r="6.2" fill="#e57373"/>
<circle cx="2297.2" cy="1396.0" r="6.2" fill="#e57373"/>
<circle cx="2299.4" cy="1393.3" r="6.2" fill="#e57373"/>
<circle cx="2302.8" cy="1389.0" r="6.2" fill="#e57373"/>
<circle cx="2303.3" cy="1388.4" r="6.2" fill="#e57373"/>
<circle cx="2306.2" cy="1388.4" r="6.2" fill="#e57373"/>
<circle cx="2309.3" cy="1388.4" r="6.2" fill="#e57373"/>
<circle cx="2309.6" cy="1388.5" r="6.2" fill="#e57373"/>
<circle cx="2313.0" cy="1389.4" r="6.2" fill="#e57373"/>
<circle cx="2316.4" cy="1390.4" r="6.2" fill="#e57373"/>
<circle cx="2318.8" cy="1391.0" r="6.2" fill="#e57373"/>
<circle cx="2319.8" cy="1392.0" r="6.2" fill="#e57373"/>
<circle cx="2323.3" cy="1395.5" r="6.2" fill="#e57373"/>
<circle cx="2326.5" cy="1398.7" r="6.2" fill="#e57373"/>
<circle cx="2326.7" cy="1398.4" r="6.2" fill="#e57373"/>
<circle cx="2330.1" cy="1392.0" r="6.2" fill="#e57373"/>
<circle cx="2332.5" cy="1387.5" r="6.2" fill="#e57373"/>
<circle cx="2333.5" cy="1389.7" r="6.2" fill="#e57373"/>
<circle cx="2336.9" cy="1397.4" r="6.2" fill="#e57373"/>
<circle cx="2339.4" cy="1403.0" r="6.2" fill="#e57373"/>
<circle cx="2340.3" cy="1401.7" r="6.2" fill="#e57373"/>
<circle cx="2343.7" cy="1396.9" r="6.2" fill="#e57373"/>
<circle cx="2347.1" cy="1392.1" r="6.2" fill="#e57373"/>
<circle cx="2349.7" cy="1388.4" r="6.2" fill="#e57373"/>
<circle cx="2350.5" cy="1391.2" r="6.2" fill="#e57373"/>
<circle cx="2353.2" cy="1400.4" r="6.2" fill="#e57373"/>
<circle cx="2353.9" cy="1398.5" r="6.2" fill="#e57373"/>
<circle cx="2357.3" cy="1389.5" r="6.2" fill="#e57373"/>
<circle cx="2360.7" cy="1380.5" r="6.2" fill="#e57373"/>
<circle cx="2361.0" cy="1379.8" r="6.2" fill="#e57373"/>
<circle cx="2364.0" cy="1369.0" r="6.2" fill="#e57373"/>
<circle cx="2364.2" cy="1370.2" r="6.2" fill="#e57373"/>
<circle cx="2367.6" cy="1396.1" r="6.2" fill="#e57373"/>
<circle cx="2367.8" cy="1397.9" r="6.2" fill="#e57373"/>
<circle cx="2371.0" cy="1398.7" r="6.2" fill="#e57373"/>
<circle cx="2374.4" cy="1399.6" r="6.2" fill="#e57373"/>
<circle cx="2377.8" cy="1400.5" r="6.2" fill="#e57373"/>
<circle cx="2380.7" cy="1401.3" r="6.2" fill="#e57373"/>
<circle cx="2381.2" cy="1400.2" r="6.2" fill="#e57373"/>
<circle cx="2384.6" cy="1392.6" r="6.2" fill="#e57373"/>
<circle cx="2388.0" cy="1385.0" r="6.2" fill="#e57373"/>
<circle cx="2388.0" cy="1385.2" r="6.2" fill="#e57373"/>
<circle cx="2391.0" cy="1419.4" r="6.2" fill="#e57373"/>
<circle cx="2391.4" cy="1419.4" r="6.2" fill="#e57373"/>
<path d="M2418 1510 L2431 1497 M2425 1510 L2431 1504" stroke="#c8cdd3" stroke-width="1.6"/>
</svg>
<div class="t" style="right:2394.5px;top:814.9px;font-size:16px;line-height:16px;color:#dfe4ea;">0.12</div>
<div class="t" style="right:2394.5px;top:927.0px;font-size:16px;line-height:16px;color:#dfe4ea;">0.1</div>
<div class="t" style="right:2394.5px;top:1039.1px;font-size:16px;line-height:16px;color:#dfe4ea;">0.08</div>
<div class="t" style="right:2394.5px;top:1151.1px;font-size:16px;line-height:16px;color:#dfe4ea;">0.06</div>
<div class="t" style="right:2394.5px;top:1263.2px;font-size:16px;line-height:16px;color:#dfe4ea;">0.04</div>
<div class="t" style="right:2394.5px;top:1375.2px;font-size:16px;line-height:16px;color:#dfe4ea;">0.02</div>
<div class="t" style="left:43.6px;width:120px;text-align:center;top:1455.4px;font-size:16px;line-height:16px;color:#dfe4ea;">13:00</div>
<div class="t" style="left:43.6px;width:120px;text-align:center;top:1479.9px;font-size:16px;line-height:16px;color:#dfe4ea;">2026-03-29</div>
<div class="t" style="left:207.2px;width:120px;text-align:center;top:1455.4px;font-size:16px;line-height:16px;color:#dfe4ea;">01:00</div>
<div class="t" style="left:207.2px;width:120px;text-align:center;top:1479.9px;font-size:16px;line-height:16px;color:#dfe4ea;">03-30</div>
<div class="t" style="left:370.8px;width:120px;text-align:center;top:1455.4px;font-size:16px;line-height:16px;color:#dfe4ea;">13:00</div>
<div class="t" style="left:534.4px;width:120px;text-align:center;top:1455.4px;font-size:16px;line-height:16px;color:#dfe4ea;">01:00</div>
<div class="t" style="left:534.4px;width:120px;text-align:center;top:1479.9px;font-size:16px;line-height:16px;color:#dfe4ea;">03-31</div>
<div class="t" style="left:698.0px;width:120px;text-align:center;top:1455.4px;font-size:16px;line-height:16px;color:#dfe4ea;">13:00</div>
<div class="t" style="left:861.6px;width:120px;text-align:center;top:1455.4px;font-size:16px;line-height:16px;color:#dfe4ea;">01:00</div>
<div class="t" style="left:861.6px;width:120px;text-align:center;top:1479.9px;font-size:16px;line-height:16px;color:#dfe4ea;">04-01</div>
<div class="t" style="left:1025.2px;width:120px;text-align:center;top:1455.4px;font-size:16px;line-height:16px;color:#dfe4ea;">13:00</div>
<div class="t" style="left:1188.8px;width:120px;text-align:center;top:1455.4px;font-size:16px;line-height:16px;color:#dfe4ea;">01:00</div>
<div class="t" style="left:1188.8px;width:120px;text-align:center;top:1479.9px;font-size:16px;line-height:16px;color:#dfe4ea;">04-02</div>
<div class="t" style="left:1352.4px;width:120px;text-align:center;top:1455.4px;font-size:16px;line-height:16px;color:#dfe4ea;">13:00</div>
<div class="t" style="left:1516.0px;width:120px;text-align:center;top:1455.4px;font-size:16px;line-height:16px;color:#dfe4ea;">01:00</div>
<div class="t" style="left:1516.0px;width:120px;text-align:center;top:1479.9px;font-size:16px;line-height:16px;color:#dfe4ea;">04-03</div>
<div class="t" style="left:1679.6px;width:120px;text-align:center;top:1455.4px;font-size:16px;line-height:16px;color:#dfe4ea;">13:00</div>
<div class="t" style="left:1843.2px;width:120px;text-align:center;top:1455.4px;font-size:16px;line-height:16px;color:#dfe4ea;">01:00</div>
<div class="t" style="left:1843.2px;width:120px;text-align:center;top:1479.9px;font-size:16px;line-height:16px;color:#dfe4ea;">04-04</div>
<div class="t" style="left:2006.8px;width:120px;text-align:center;top:1455.4px;font-size:16px;line-height:16px;color:#dfe4ea;">13:00</div>
<div class="t" style="left:2170.4px;width:120px;text-align:center;top:1455.4px;font-size:16px;line-height:16px;color:#dfe4ea;">01:00</div>
<div class="t" style="left:2170.4px;width:120px;text-align:center;top:1479.9px;font-size:16px;line-height:16px;color:#dfe4ea;">04-05</div>
<div class="a" style="left:629px;top:1512px;width:100px;height:50px;border:1px solid #5d90e6;border-radius:8px;"></div>
<div class="a" style="left:643px;top:1535px;width:48px;height:2px;background:#6ea2f3;"></div>
<div class="t" style="left:703.00px;top:1525.50px;font-size:22px;line-height:22px;color:#d5dce4;font-weight:normal;font-family:'Liberation Sans', sans-serif;letter-spacing:0px;">y</div>
<svg class="a" style="left:792px;top:1534px;" width="44" height="4" viewBox="0 0 44 4"><path d="M1 2 H42" stroke="#b8784a" stroke-width="1.6" stroke-dasharray="15.4 9.2"/></svg>
<div class="t" style="left:853.20px;top:1525.50px;font-size:22px;line-height:22px;color:#d5dce4;font-weight:normal;font-family:'Liberation Sans', sans-serif;letter-spacing:0.45px;">anomaly_score</div>
<div class="a" style="left:1073px;top:1512px;width:133px;height:50px;border:1px solid #5d90e6;border-radius:8px;"></div>
<svg class="a" style="left:1086px;top:1534px;" width="50" height="4" viewBox="0 0 50 4"><path d="M1 2 H49" stroke="#d9679e" stroke-width="1.6" stroke-dasharray="15 3.5"/></svg>
<div class="t" style="left:1147.50px;top:1525.50px;font-size:22px;line-height:22px;color:#d5dce4;font-weight:normal;font-family:'Liberation Sans', sans-serif;letter-spacing:0.87px;">yhat</div>
<div class="a" style="left:1257px;top:1512px;width:342px;height:50px;border:1px solid #5d90e6;border-radius:8px;"></div>
<svg class="a" style="left:1270px;top:1534px;" width="44" height="4" viewBox="0 0 44 4"><path d="M1 2 H42" stroke="#9a6fd3" stroke-width="1.6" stroke-dasharray="15.4 9"/></svg>
<div class="t" style="left:1332.50px;top:1525.50px;font-size:22px;line-height:22px;color:#d5dce4;font-weight:normal;font-family:'Liberation Sans', sans-serif;letter-spacing:0.77px;">yhat_upper - yhat_lower</div>
<div class="a" style="left:1650px;top:1512px;width:193px;height:50px;border:1px solid #5d90e6;border-radius:8px;"></div>
<div class="a" style="left:1680px;top:1529px;width:15.5px;height:15.5px;border-radius:50%;background:#e57373;"></div>
<div class="t" style="left:1724.20px;top:1525.50px;font-size:22px;line-height:22px;color:#d5dce4;font-weight:normal;font-family:'Liberation Sans', sans-serif;letter-spacing:0.4px;">anomalies</div>
<svg class="a" style="left:78px;top:1591px;" width="16" height="17" viewBox="0 0 16 17"><path d="M0.5 0.5 H15 L9.5 7.5 V15.5 L6 16.5 V7.5 Z" fill="#6ea2f3"/></svg>
<div class="t" style="left:107.00px;top:1589.00px;font-size:20px;line-height:20px;color:#6ea2f3;font-weight:normal;font-family:'Liberation Sans', sans-serif;letter-spacing:0px;">Filter</div>
<div class="a" style="left:1753px;top:1586px;width:55px;height:27px;background:#4a76c9;border-radius:13.5px;"></div>
<div class="a" style="left:1786.6px;top:1591.1px;width:16.8px;height:16.8px;border-radius:50%;background:#2e313a;"></div>
<div class="t" style="left:1821.00px;top:1590.50px;font-size:20px;line-height:20px;color:#d5dce4;font-weight:normal;font-family:'Liberation Sans', sans-serif;letter-spacing:0px;">Table View</div>
<div class="a" style="left:1937px;top:1586px;width:54px;height:27px;background:#4a76c9;border-radius:13.5px;"></div>
<div class="a" style="left:1969.6px;top:1591.1px;width:16.8px;height:16.8px;border-radius:50%;background:#2e313a;"></div>
<div class="t" style="left:2004.00px;top:1590.50px;font-size:20px;line-height:20px;color:#d5dce4;font-weight:normal;font-family:'Liberation Sans', sans-serif;letter-spacing:0px;">Hide Common Labels</div>
<div class="a" style="left:2216px;top:1586px;width:54px;height:27px;background:#24272d;border-radius:13.5px;"></div>
<div class="a" style="left:2221.3px;top:1590.9px;width:17.2px;height:17.2px;border-radius:50%;background:#2f3239;"></div>
<div class="t" style="left:2283.00px;top:1590.50px;font-size:20px;line-height:20px;color:#6f7883;font-weight:normal;font-family:'Liberation Sans', sans-serif;letter-spacing:0.33px;">Hide Statistics</div>
<div class="t" style="left:50.60px;top:1651.42px;font-size:19.5px;line-height:19.5px;color:#858d98;font-weight:normal;font-family:'Liberation Sans', sans-serif;letter-spacing:0.38px;">Group by query:</div>
<div class="t" style="left:210.00px;top:1651.42px;font-size:19.5px;line-height:19.5px;color:#d5dce4;font-weight:bold;font-family:'Liberation Sans', sans-serif;letter-spacing:0.49px;">* | stats rate() as logs_per_sec</div>
<svg class="a" style="left:2392px;top:1654px;" width="16" height="13" viewBox="0 0 16 13"><path d="M2 10 L8 4 L14 10" fill="none" stroke="#d5dce4" stroke-width="2"/></svg>
<div class="a" style="left:50px;top:1682px;width:2384px;height:1px;background:#4a4f58;"></div>
<svg class="a" style="left:0;top:0" width="2472" height="1684"><g fill="#000">
<path d="M0 0 H10.5 C5.5 0.8 0.8 5.5 0 10.5 Z"/>
<path d="M2472 0 H2461.5 C2466.5 0.8 2471.2 5.5 2472 10.5 Z"/>
<path d="M0 1684 H10.5 C5.5 1683.2 0.8 1678.5 0 1673.5 Z"/>
<path d="M2472 1684 H2461 C2466.2 1683.2 2471.2 1678.5 2472 1673 Z"/>
</g></svg>
</body></html>
